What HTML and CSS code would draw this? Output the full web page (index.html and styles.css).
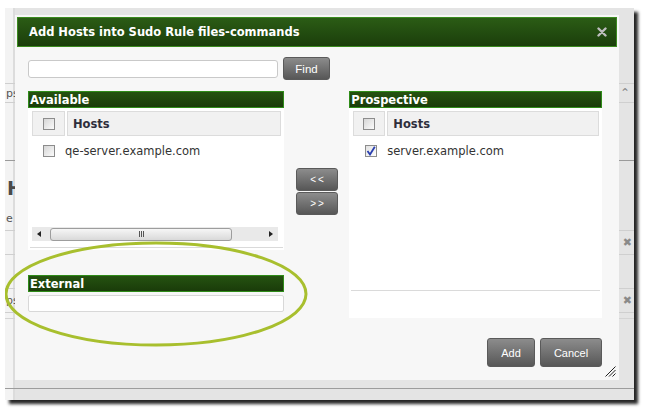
FILE: index.html
```html
<!DOCTYPE html>
<html>
<head>
<meta charset="utf-8">
<link rel="stylesheet" href="styles.css">
</head>
<body>
<div class="shot">
  <div class="page">
    <div class="prow r1"><span class="ptext">ps</span><span class="pup">&#8963;</span></div>
    <div class="phr"></div>
    <div class="phead">H</div>
    <div class="ptext pline">e a</div>
    <div class="prow r2"><span></span><span class="px">&#10006;</span></div>
    <div class="prow r3"><span class="ptext">ps</span><span class="px">&#10006;</span></div>
    <div class="pthin"></div>
    <div class="pbottom"></div>
  </div>

  <div class="dialog">
    <div class="titlebar">
      <span class="title">Add Hosts into Sudo Rule files-commands</span>
      <svg class="close" width="10" height="10" viewBox="0 0 10 10"><path d="M1.5 1.5 L8.5 8.5 M8.5 1.5 L1.5 8.5" stroke="#bdbdbd" stroke-width="2.4" stroke-linecap="round"/></svg>
    </div>
    <div class="body">
      <div class="search">
        <input class="search-input" type="text">
        <button class="btn find">Find</button>
      </div>
      <div class="panels">
        <div class="col">
          <div class="sec-head">Available</div>
          <div class="panel avail">
            <div class="thead">
              <div class="th cbcell"><span class="check"></span></div>
              <div class="th name">Hosts</div>
            </div>
            <div class="row"><span class="check"></span><span>qe-server.example.com</span></div>
            <div class="scrollbar">
              <span class="arrow left"></span>
              <span class="thumb"><span class="gripl"></span><span class="gripl"></span><span class="gripl"></span></span>
              <span class="arrow right"></span>
            </div>
            <div class="pfoot"></div>
          </div>
          <div class="sec-head ext">External</div>
          <input class="ext-input" type="text">
        </div>
        <div class="mid">
          <button class="btn move">&lt;&lt;</button>
          <button class="btn move">&gt;&gt;</button>
        </div>
        <div class="col">
          <div class="sec-head">Prospective</div>
          <div class="panel prosp">
            <div class="thead">
              <div class="th cbcell"><span class="check"></span></div>
              <div class="th name">Hosts</div>
            </div>
            <div class="row pr"><span class="check checked"><svg width="10" height="10" viewBox="0 0 10 10"><path d="M1.5 5 L4 8.5 L8.8 0.8" fill="none" stroke="#2a3fb0" stroke-width="1.8"/></svg></span><span>server.example.com</span></div>
            <div class="pfoot2"></div>
          </div>
        </div>
      </div>
      <div class="footer">
        <button class="btn add">Add</button>
        <button class="btn cancel">Cancel</button>
      </div>
    </div>
    <svg class="grip" width="11" height="11" viewBox="0 0 11 11"><path d="M0.5 10.5 L10.5 0.5 M4 10.5 L10.5 4 M7.5 10.5 L10.5 7.5" stroke="#222" stroke-width="1"/></svg>
  </div>

  <svg class="annot" width="629" height="392" viewBox="0 0 629 392"><ellipse cx="151" cy="286" rx="150" ry="51" fill="none" stroke="#a8bf2e" stroke-width="3"/></svg>
</div>
</body>
</html>
```

FILE: styles.css
```css
html, body {
  margin: 0;
  background: #fff;
}
body {
  width: 650px;
  height: 418px;
  overflow: hidden;
  padding-top: 8px;
  box-sizing: border-box;
  font-family: "DejaVu Sans", Verdana, sans-serif;
}
.shot {
  position: relative;
  margin-left: 5px;
  width: 629px;
  height: 392px;
  background: #e5e5e5;
  box-shadow: 4px 4px 3px rgba(0, 0, 0, 0.85);
}

/* underlying page */
.page {
  display: flex;
  flex-direction: column;
  height: 100%;
  background: linear-gradient(to right, #f3f3f3 8px, #dcdcdc 8px, #dcdcdc 10px, #e4e4e4 10px);
  color: #555;
  font-size: 11px;
}
.prow {
  display: flex;
  justify-content: space-between;
  align-items: center;
  border-top: 1px solid #cfcfcf;
  border-bottom: 1px solid #cfcfcf;
  box-sizing: border-box;
}
.r1 { margin-top: 75px; height: 20px; }
.r2 { margin-top: 4px; height: 25px; }
.r3 { margin-top: 33px; height: 25px; }
.ptext { padding-left: 1px; color: #555; }
.pup { padding-right: 4px; color: #888; font-size: 12px; }
.px { padding-right: 2px; color: #8a8a8a; font-size: 11px; }
.phr { margin-top: 57px; border-top: 1px solid #9a9a9a; }
.phead {
  margin-top: 18px;
  padding-left: 2px;
  font-weight: bold;
  font-size: 19px;
  line-height: 19px;
  color: #4a4a4a;
}
.pline { margin-top: 14px; line-height: 14px; }
.pthin { margin-top: 5px; border-top: 1px solid #d4d4d4; }
.pbottom { margin-top: auto; margin-bottom: 11px; border-top: 1px solid #9c9c9c; }

/* dialog */
.dialog {
  position: absolute;
  left: 10px;
  top: 7px;
  width: 604px;
  height: 365px;
  box-sizing: border-box;
  padding: 2px;
  background: #f7f7f7;
}
.titlebar {
  height: 30px;
  box-sizing: border-box;
  border: 1px solid #3b8a1f;
  background: linear-gradient(#2b5c15, #1b3e0b);
  display: flex;
  align-items: center;
  justify-content: space-between;
  padding: 0 9px 0 11px;
}
.title {
  color: #fff;
  font-weight: bold;
  font-size: 11.5px;
}
.close { display: block; }
.body {
  padding: 10px 15px 0 11px;
}
.search {
  display: flex;
  align-items: center;
  gap: 5px;
  height: 23px;
}
.search-input {
  width: 250px;
  height: 18px;
  box-sizing: border-box;
  border: 1px solid #c9c9c9;
  border-radius: 3px;
  background: #fff;
  margin: 0;
  padding: 0;
}
.btn {
  margin: 0;
  padding: 0;
  box-sizing: border-box;
  border: 1px solid #5a5a5a;
  border-radius: 3px;
  background: linear-gradient(#8c8c8c, #575757);
  color: #fff;
  font-family: "Liberation Sans", Arial, sans-serif;
  font-size: 11px;
}
.find { width: 47px; height: 23px; font-size: 11.5px; }

.panels {
  display: flex;
  margin-top: 11px;
}
.col {
  width: 256px;
  display: flex;
  flex-direction: column;
}
.sec-head {
  height: 17px;
  box-sizing: border-box;
  border: 1px solid #2f8c19;
  background: linear-gradient(#255211, #1a3c09);
  color: #fff;
  font-weight: bold;
  font-size: 11.5px;
  line-height: 16px;
  padding-left: 1px;
}
.panel {
  background: #fff;
  display: flex;
  flex-direction: column;
}
.avail { height: 142px; }
.prosp { height: 210px; }
.thead {
  display: flex;
  gap: 2px;
  height: 25px;
  margin: 3px 3px 0 4px;
}
.th {
  box-sizing: border-box;
  background: #f1f1f1;
  border: 1px solid #dcdcdc;
}
.cbcell {
  width: 33px;
  display: flex;
  align-items: center;
  justify-content: center;
}
.prosp .cbcell { width: 32px; }
.name {
  flex: 1;
  padding-left: 5px;
  font-weight: bold;
  font-size: 11.5px;
  line-height: 25px;
  color: #2e2e3c;
}
.check {
  width: 12px;
  height: 12px;
  box-sizing: border-box;
  border: 1px solid #8c8c8c;
  background: linear-gradient(135deg, #d6d6d6, #fbfbfb);
  display: flex;
  align-items: center;
  justify-content: center;
  flex: none;
}
.checked { background: linear-gradient(135deg, #e2e2e2, #fdfdfd); }
.row {
  display: flex;
  align-items: center;
  gap: 10px;
  height: 16px;
  margin-top: 7px;
  padding-left: 15px;
  font-size: 11.5px;
  color: #333;
}
.pr { padding-left: 16px; }

.scrollbar {
  margin: 68px 0 0 4px;
  width: 246px;
  height: 14px;
  background: #e9e9e9;
  display: flex;
  align-items: center;
}
.arrow {
  width: 0;
  height: 0;
  border-top: 3px solid transparent;
  border-bottom: 3px solid transparent;
}
.arrow.left { border-right: 4px solid #222; margin: 0 9px 0 5px; }
.arrow.right { border-left: 4px solid #222; margin-left: auto; margin-right: 5px; }
.thumb {
  width: 182px;
  height: 13px;
  box-sizing: border-box;
  border: 1px solid #9d9d9d;
  border-radius: 3px;
  background: linear-gradient(#f6f6f6, #d9d9d9);
  display: flex;
  align-items: center;
  justify-content: center;
  gap: 1px;
}
.gripl {
  width: 1px;
  height: 6px;
  background: #555;
}
.pfoot {
  margin: 6px 1px 0 2px;
  border-top: 1px solid #dadada;
}
.ext { margin-top: 25px; }
.ext-input {
  margin: 3px 0 0 0;
  padding: 0;
  width: 256px;
  height: 17px;
  box-sizing: border-box;
  border: 1px solid #d8d8d8;
  border-radius: 2px;
  background: #fff;
}
.mid {
  width: 66px;
  display: flex;
  flex-direction: column;
  gap: 1px;
  padding: 77px 0 0 12px;
  box-sizing: border-box;
}
.move {
  width: 42px;
  height: 23px;
  font-size: 10px;
  letter-spacing: 2px;
  padding-left: 2px;
}
.pfoot2 {
  margin: auto 2px 0 2px;
  height: 27px;
  border-top: 1px solid #dadada;
}
.footer {
  display: flex;
  justify-content: flex-end;
  gap: 5px;
  margin-top: 20px;
}
.add { width: 48px; height: 29px; }
.cancel { width: 62px; height: 29px; }
.grip {
  position: absolute;
  right: 3px;
  bottom: 3px;
}
.annot {
  position: absolute;
  left: 0;
  top: 0;
  pointer-events: none;
}
```
